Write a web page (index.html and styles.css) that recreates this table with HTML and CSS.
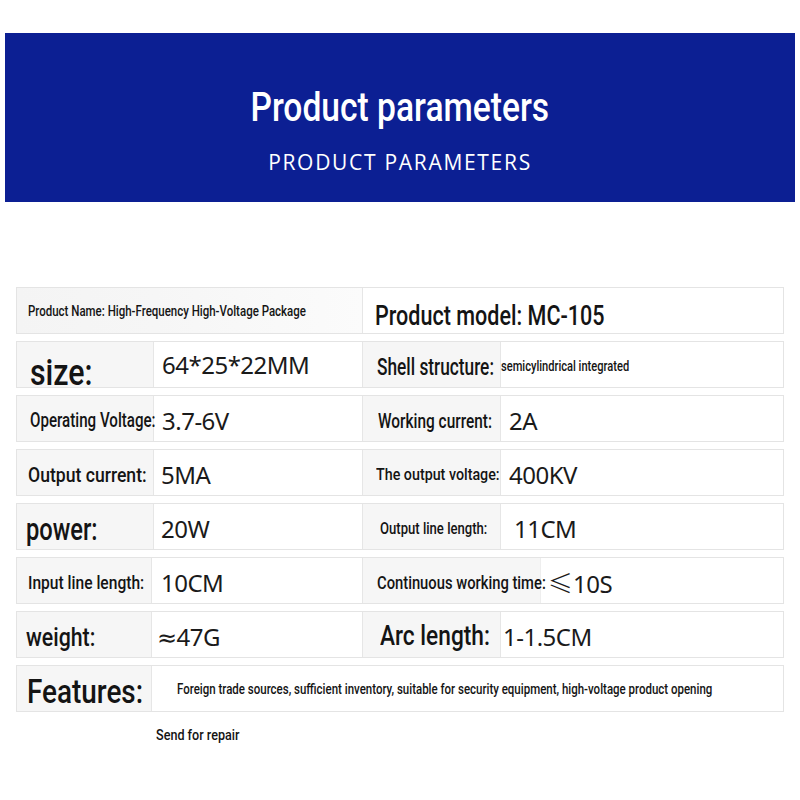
FILE: index.html
```html
<!DOCTYPE html>
<html>
<head>
<meta charset="utf-8">
<link rel="stylesheet" href="styles.css">
</head>
<body>
<div class="banner">
  <div class="title">Product parameters</div>
  <div class="subtitle">PRODUCT PARAMETERS</div>
</div>
<div class="table">
  <div class="row">
    <div class="cell wide"><span class="k s14 p11 lift">Product Name: High-Frequency High-Voltage Package</span></div>
    <div class="cell v2"><span class="k s28 sc77 p12 drop3">Product model: MC-105</span></div>
  </div>
  <div class="row">
    <div class="cell l1 label"><span class="k s37 p13 drop6">size:</span></div>
    <div class="cell v1"><span class="v p8 lift">64*25*22MM</span></div>
    <div class="cell l2 label"><span class="k s24 sc72 p14">Shell structure:</span></div>
    <div class="cell v2"><span class="k s15 sc74 p0">semicylindrical integrated</span></div>
  </div>
  <div class="row">
    <div class="cell l1 label"><span class="k s21 sc72 p13">Operating Voltage:</span></div>
    <div class="cell v1"><span class="v p8">3.7-6V</span></div>
    <div class="cell l2 label"><span class="k s20 sc77 p15">Working current:</span></div>
    <div class="cell v2"><span class="v p8">2A</span></div>
  </div>
  <div class="row">
    <div class="cell l1 label"><span class="k s20 sc88 p11">Output current:</span></div>
    <div class="cell v1"><span class="v p7">5MA</span></div>
    <div class="cell l2 label"><span class="k s17 sc84 p13">The output voltage:</span></div>
    <div class="cell v2"><span class="v p8">400KV</span></div>
  </div>
  <div class="row">
    <div class="cell l1 label"><span class="k s32 sc74 p9">power:</span></div>
    <div class="cell v1"><span class="v p7">20W</span></div>
    <div class="cell l2 label"><span class="k s17 sc77 p17">Output line length:</span></div>
    <div class="cell v2"><span class="v p13">11CM</span></div>
  </div>
  <div class="row">
    <div class="cell l1n label"><span class="k s19 p11">Input line length:</span></div>
    <div class="cell v1w"><span class="v p9">10CM</span></div>
    <div class="cell l2w label"><span class="k s18 p14">Continuous working time:</span></div>
    <div class="cell v2"><span class="v p7"><span class="le">≤</span>10S</span></div>
  </div>
  <div class="row">
    <div class="cell l1n label"><span class="k s26 p9">weight:</span></div>
    <div class="cell v1w"><span class="v p5">≈47G</span></div>
    <div class="cell l2 label"><span class="k s27 sc84 p17">Arc length:</span></div>
    <div class="cell v2"><span class="v p2">1-1.5CM</span></div>
  </div>
  <div class="row">
    <div class="cell l1n label"><span class="k s34 p10">Features:</span></div>
    <div class="cell v2"><span class="k s14 p25 lift">Foreign trade sources, sufficient inventory, suitable for security equipment, high-voltage product opening</span></div>
  </div>
</div>
<div class="repair"><span class="k s15 sc84">Send for repair</span></div>
</body>
</html>
```

FILE: styles.css
```css
html, body {
  margin: 0;
  padding: 0;
  background: #ffffff;
}
body {
  width: 800px;
  font-family: "Roboto", "Liberation Sans", sans-serif;
  color: #111;
}
.banner {
  margin: 33px 5px 0;
  height: 169px;
  background: #0c1f93;
  display: flex;
  flex-direction: column;
  align-items: center;
  color: #fff;
}
.title {
  margin-top: 55px;
  font-family: "Roboto", "Liberation Sans", sans-serif;
  font-size: 40px;
  font-weight: 500;
  line-height: 1;
  white-space: nowrap;
  transform: scaleX(0.84);
}
.subtitle {
  margin-top: 24px;
  font-family: "Open Sans", "DejaVu Sans", sans-serif;
  font-size: 21px;
  letter-spacing: 1.7px;
  line-height: 1;
  white-space: nowrap;
}
.table {
  margin-top: 85px;
  padding: 0 16px;
  display: flex;
  flex-direction: column;
  gap: 7px;
}
.row {
  display: flex;
  height: 47px;
  border: 1px solid #e4e4e4;
  box-sizing: border-box;
}
.cell {
  display: flex;
  align-items: center;
  padding-top: 4px;
  border-right: 1px solid #e6e6e6;
  box-sizing: border-box;
  white-space: nowrap;
  flex: none;
}
.cell:last-child { border-right: none; }
.label { background: #f6f6f6; }
.l1 { width: 137px; }
.v1 { width: 209px; }
.l1n { width: 135px; }
.v1w { width: 211px; }
.l2 { width: 138px; }
.l2w { width: 178px; border-right-color: #eeeeee; }
.v2 { flex: 1 1 0; min-width: 0; }
.wide {
  width: 346px;
  background: linear-gradient(90deg, #f4f4f4 0%, #f6f6f6 40%, #fbfbfb 100%);
}
.k {
  display: inline-block;
  font-family: "Roboto", "Liberation Sans", sans-serif;
  font-weight: 500;
  color: #141414;
  line-height: 1;
  transform: scaleX(0.82);
  transform-origin: 0 50%;
}
.sc72 { transform: scaleX(0.72); }
.sc74 { transform: scaleX(0.74); }
.sc77 { transform: scaleX(0.77); }
.sc84 { transform: scaleX(0.84); }
.sc88 { transform: scaleX(0.88); }
.v {
  font-family: "Noto Sans", "DejaVu Sans", sans-serif;
  font-size: 24px;
  letter-spacing: -0.5px;
  font-weight: 400;
  color: #1a1a1a;
  line-height: 1;
}
.le {
  font-family: "Noto Sans CJK SC", "Noto Sans", sans-serif;
  font-weight: 300;
  font-size: 25px;
  letter-spacing: 0;
}
.drop3 { padding-top: 6px; }
.drop6 { padding-top: 12px; }
.lift { padding-bottom: 4px; }
.s14 { font-size: 14px; }
.s15 { font-size: 15px; }
.s17 { font-size: 17px; }
.s18 { font-size: 18px; }
.s19 { font-size: 19px; }
.s20 { font-size: 20px; }
.s21 { font-size: 21px; }
.s24 { font-size: 24px; }
.s26 { font-size: 26px; }
.s27 { font-size: 27px; }
.s28 { font-size: 28px; }
.s32 { font-size: 32px; }
.s34 { font-size: 34px; }
.s37 { font-size: 37px; }
.p0 { margin-left: 0; }
.p2 { margin-left: 2px; }
.p5 { margin-left: 5px; }
.p7 { margin-left: 7px; }
.p8 { margin-left: 8px; }
.p9 { margin-left: 9px; }
.p10 { margin-left: 10px; }
.p11 { margin-left: 11px; }
.p12 { margin-left: 12px; }
.p13 { margin-left: 13px; }
.p14 { margin-left: 14px; }
.p15 { margin-left: 15px; }
.p17 { margin-left: 17px; }
.p25 { margin-left: 25px; }
.repair {
  margin: 15px 0 0 156px;
  line-height: 1;
}
```
